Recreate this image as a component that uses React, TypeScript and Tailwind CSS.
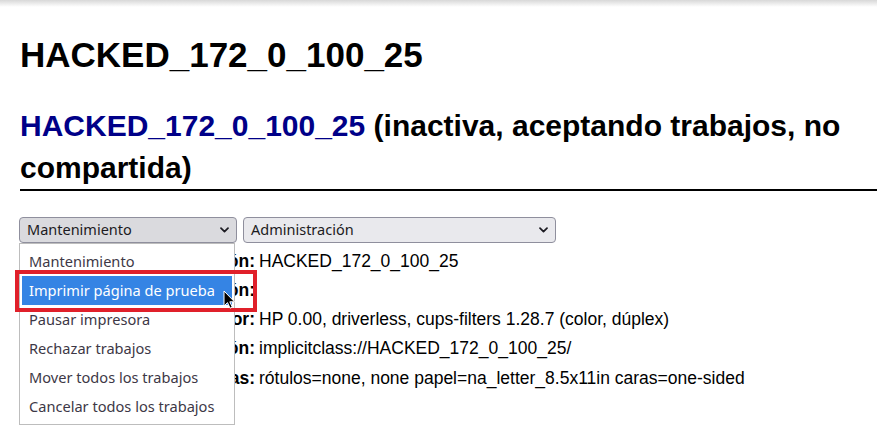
import React from 'react';

const maintenanceItems = [
    'Mantenimiento',
    'Imprimir página de prueba',
    'Pausar impresora',
    'Rechazar trabajos',
    'Mover todos los trabajos',
    'Cancelar todos los trabajos',
];

const details: [string, string][] = [
    ['Descripción:', 'HACKED_172_0_100_25'],
    ['Ubicación:', ''],
    ['Controlador:', 'HP 0.00, driverless, cups-filters 1.28.7 (color, dúplex)'],
    ['Conexión:', 'implicitclass://HACKED_172_0_100_25/'],
    ['Opciones predeterminadas:', 'rótulos=none, none papel=na_letter_8.5x11in caras=one-sided'],
];

const Chevron = () => (
    <svg width="9" height="6" viewBox="0 0 9 6" fill="none" className="shrink-0">
        <path d="M1 1.2l3.5 3.5 3.5-3.5" stroke="#1c1b22" strokeWidth="1.7" strokeLinecap="round" strokeLinejoin="round" />
    </svg>
);

const FakeSelect = ({ label, width, open }: { label: string; width: string; open?: boolean }) => (
    <div
        className={`${width} h-[26px] flex items-center justify-between pl-[7px] pr-[7px] border border-[#8f8f9d] rounded-[4px] text-[14.5px] text-[#1c1b22] ${open ? 'bg-[#dadade]' : 'bg-[#e9e9ed]'}`}
        style={{ fontFamily: '"Noto Sans", sans-serif' }}
    >
        <span>{label}</span>
        <Chevron />
    </div>
);

const Cursor = () => (
    <svg width="12" height="19" viewBox="0 0 12 19" className="absolute left-[223px] top-[290px]">
        <path d="M1 1v15l3.5-3.4 2.6 5.6 2.2-1-2.5-5.4H11.5L1 1z" fill="#000" stroke="#fff" strokeWidth="1" strokeLinejoin="round" />
    </svg>
);

const App = () => {
    return (
        <div className="relative w-[877px] h-[427px] overflow-hidden bg-white text-black" style={{ fontFamily: '"Liberation Sans", Arial, sans-serif' }}>
            {/* sombra superior de la barra del navegador */}
            <div className="absolute inset-x-0 top-0 h-[7px] bg-gradient-to-b from-[#d8d8d8] to-transparent"></div>

            <div className="pl-[20px]">
                <h1 className="pt-[35px] text-[35px] leading-[40px] font-bold">HACKED_172_0_100_25</h1>
                <h2 className="mt-[30px] text-[30px] leading-[42px] font-bold border-b-2 border-black">
                    <span className="text-[#000088]">HACKED_172_0_100_25</span> (inactiva, aceptando trabajos, no compartida)
                </h2>

                <div className="mt-[26px] flex gap-[6px] -ml-[1px]">
                    <FakeSelect label="Mantenimiento" width="w-[218px]" open />
                    <FakeSelect label="Administración" width="w-[313px]" />
                </div>

                <div className="mt-[3.5px] grid grid-cols-[235px_1fr] gap-x-[4px] text-[17.5px] leading-[29.3px]">
                    {details.map(([label, value]) => (
                        <React.Fragment key={label}>
                            <div className="text-right font-bold whitespace-nowrap">{label}</div>
                            <div className="whitespace-nowrap">{value || '\u00a0'}</div>
                        </React.Fragment>
                    ))}
                </div>
            </div>

            {/* lista desplegable abierta */}
            <div
                className="absolute left-[19px] top-[243px] w-[216px] h-[182px] bg-white border border-[#bdbdbd] px-[2px] py-[3px] text-[14.6px] text-[#3d3846]"
                style={{ fontFamily: '"Noto Sans", sans-serif' }}
            >
                {maintenanceItems.map((item, i) => (
                    <div
                        key={item}
                        className={`h-[29px] leading-[29px] pl-[7px] whitespace-nowrap ${i === 1 ? 'bg-[#3584e4] text-white' : ''}`}
                    >
                        {item}
                    </div>
                ))}
            </div>

            {/* marco rojo de resaltado */}
            <div className="absolute left-[15px] top-[270px] w-[242px] h-[42px] border-[4px] border-[#e0202a]"></div>

            <Cursor />
        </div>
    );
};

export default App;
